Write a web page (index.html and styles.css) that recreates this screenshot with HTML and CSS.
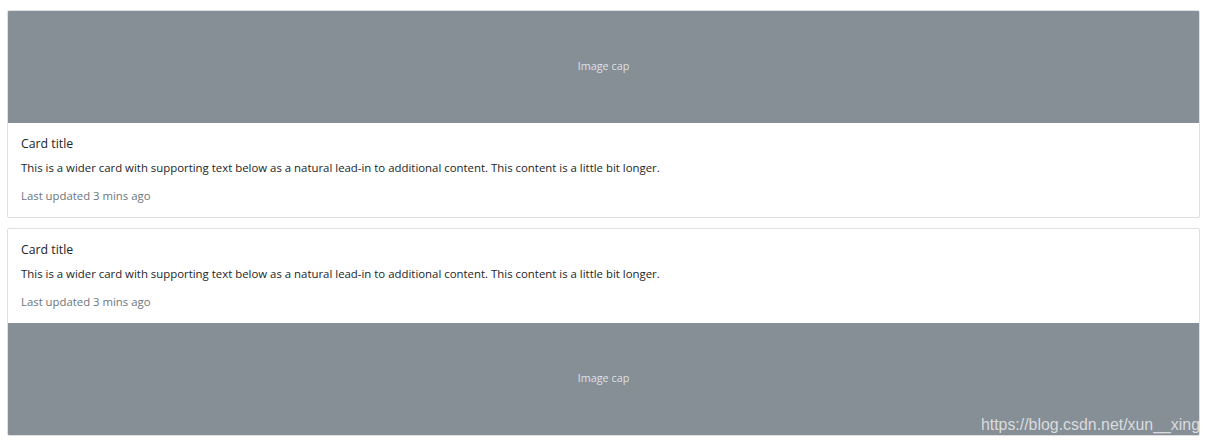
FILE: index.html
```html
<!DOCTYPE html>
<html>
<head>
<meta charset="utf-8">
<link rel="stylesheet" href="styles.css">
</head>
<body>
<div class="page">
  <div class="card">
    <div class="img-cap"><span>Image cap</span></div>
    <div class="card-body">
      <h5 class="card-title">Card title</h5>
      <p class="card-text">This is a wider card with supporting text below as a natural lead-in to additional content. This content is a little bit longer.</p>
      <p class="card-text last"><small class="muted">Last updated 3 mins ago</small></p>
    </div>
  </div>
  <div class="card">
    <div class="card-body">
      <h5 class="card-title">Card title</h5>
      <p class="card-text">This is a wider card with supporting text below as a natural lead-in to additional content. This content is a little bit longer.</p>
      <p class="card-text last"><small class="muted">Last updated 3 mins ago</small></p>
    </div>
    <div class="img-cap"><span>Image cap</span></div>
  </div>
  <div class="watermark">https://blog.csdn.net/xun__xing</div>
</div>
</body>
</html>
```
FILE: styles.css
```css
html, body {
  margin: 0;
  padding: 0;
  background: #fff;
}
body {
  font-family: "Open Sans", "Noto Sans", sans-serif;
  color: #212529;
}
.page {
  position: relative;
  width: 1209px;
  height: 445px;
  padding: 10px 9px 0 7px;
  box-sizing: border-box;
  display: flex;
  flex-direction: column;
  gap: 10px;
  overflow: hidden;
}
.card {
  border: 1px solid #dfdfdf;
  border-radius: 2px;
  overflow: hidden;
  display: flex;
  flex-direction: column;
}
.img-cap {
  height: 112px;
  box-sizing: border-box;
  padding-bottom: 3px;
  background: #868e96;
  display: flex;
  align-items: center;
  justify-content: center;
  color: #dee2e6;
  font-size: 10.8px;
}
.card-body {
  padding: 13px 13px 13px;
}
.card-title {
  margin: 0 0 8px;
  font-size: 12.3px;
  font-weight: 400;
  line-height: 15px;
}
.card-text {
  margin: 0 0 11px;
  font-size: 11.4px;
  line-height: 17px;
}
.card-text.last {
  margin: 0;
}
.muted {
  color: #6c757d;
  font-size: 11.35px;
}
.watermark {
  position: absolute;
  right: 9px;
  top: 415px;
  font-family: "Liberation Sans", Arial, sans-serif;
  font-size: 15.9px;
  line-height: 20px;
  color: rgba(255,255,255,0.7);
}
```
